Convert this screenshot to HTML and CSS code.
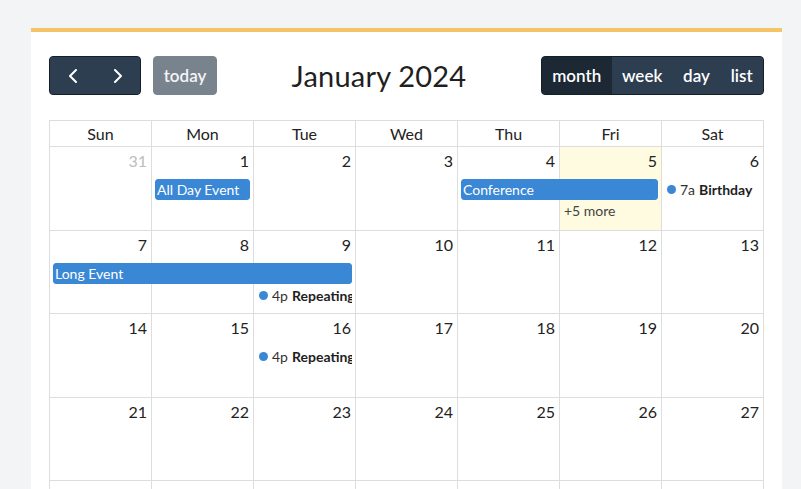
FILE: index.html
```html
<!DOCTYPE html>
<html lang="en">
<head>
<meta charset="utf-8">
<title>Calendar</title>
<link rel="stylesheet" href="styles.css">
</head>
<body>
<div class="card">
  <div class="toolbar">
    <div class="chunk">
      <div class="btn-group">
        <button class="btn nav-btn" aria-label="prev"><svg width="10" height="14" viewBox="0 0 10 14"><path d="M8 1 L2 7 L8 13"/></svg></button>
        <button class="btn nav-btn" aria-label="next"><svg width="10" height="14" viewBox="0 0 10 14"><path d="M2 1 L8 7 L2 13"/></svg></button>
      </div>
      <button class="btn today" disabled>today</button>
    </div>
    <h2 class="title">January 2024</h2>
    <div class="btn-group">
      <button class="btn active">month</button>
      <button class="btn">week</button>
      <button class="btn">day</button>
      <button class="btn">list</button>
    </div>
  </div>

  <div class="cal">
    <div class="head">
      <div class="hcell">Sun</div>
      <div class="hcell">Mon</div>
      <div class="hcell">Tue</div>
      <div class="hcell">Wed</div>
      <div class="hcell">Thu</div>
      <div class="hcell">Fri</div>
      <div class="hcell">Sat</div>
    </div>

    <div class="week">
      <div class="day c1 other"><div class="num">31</div></div>
      <div class="day c2"><div class="num">1</div></div>
      <div class="day c3"><div class="num">2</div></div>
      <div class="day c4"><div class="num">3</div></div>
      <div class="day c5"><div class="num">4</div></div>
      <div class="day c6 today-cell"><div class="num">5</div></div>
      <div class="day c7"><div class="num">6</div></div>
      <div class="ev block r2 s2 w1">All Day Event</div>
      <div class="ev block r2 s5 w2">Conference</div>
      <div class="more r3 s6">+5 more</div>
      <div class="ev dot-ev r2 s7"><span class="dot"></span><span class="time">7a</span> <b>Birthday</b></div>
    </div>

    <div class="week">
      <div class="day c1"><div class="num">7</div></div>
      <div class="day c2"><div class="num">8</div></div>
      <div class="day c3"><div class="num">9</div></div>
      <div class="day c4"><div class="num">10</div></div>
      <div class="day c5"><div class="num">11</div></div>
      <div class="day c6"><div class="num">12</div></div>
      <div class="day c7"><div class="num">13</div></div>
      <div class="ev block r2 s1 w3">Long Event</div>
      <div class="ev dot-ev r3 s3"><span class="dot"></span><span class="time">4p</span> <b>Repeating Event</b></div>
    </div>

    <div class="week">
      <div class="day c1"><div class="num">14</div></div>
      <div class="day c2"><div class="num">15</div></div>
      <div class="day c3"><div class="num">16</div></div>
      <div class="day c4"><div class="num">17</div></div>
      <div class="day c5"><div class="num">18</div></div>
      <div class="day c6"><div class="num">19</div></div>
      <div class="day c7"><div class="num">20</div></div>
      <div class="ev dot-ev r2 s3"><span class="dot"></span><span class="time">4p</span> <b>Repeating Event</b></div>
    </div>

    <div class="week">
      <div class="day c1"><div class="num">21</div></div>
      <div class="day c2"><div class="num">22</div></div>
      <div class="day c3"><div class="num">23</div></div>
      <div class="day c4"><div class="num">24</div></div>
      <div class="day c5"><div class="num">25</div></div>
      <div class="day c6"><div class="num">26</div></div>
      <div class="day c7"><div class="num">27</div></div>
    </div>

    <div class="week">
      <div class="day c1"></div>
      <div class="day c2"></div>
      <div class="day c3"></div>
      <div class="day c4"></div>
      <div class="day c5"></div>
      <div class="day c6"></div>
      <div class="day c7"></div>
    </div>
  </div>
</div>
</body>
</html>
```

FILE: styles.css
```css
* { box-sizing: border-box; }

html, body {
  margin: 0;
  padding: 0;
  background: #f3f4f6;
  font-family: Lato, "Noto Sans", "Liberation Sans", sans-serif;
  color: #222;
  overflow: hidden;
}

.card {
  margin: 28px 0 0 31px;
  width: 751px;
  background: #ffffff;
  border-top: 4px solid #f5c468;
  padding: 24px 18px 0;
}

.toolbar {
  display: flex;
  justify-content: space-between;
  align-items: center;
  margin-bottom: 25px;
}

.chunk {
  display: flex;
  align-items: center;
  gap: 12px;
}

.btn-group {
  display: flex;
  border: 1px solid #151f29;
  border-radius: 4px;
  overflow: hidden;
  background: #2c3e50;
}

.btn {
  height: 37px;
  border: 0;
  margin: 0;
  padding: 0 10.4px;
  background: #2c3e50;
  color: #ffffff;
  font-family: inherit;
  font-size: 17px;
  font-weight: 600;
  display: flex;
  align-items: center;
  justify-content: center;
}

.btn.active {
  background: #1c2833;
}

.nav-btn {
  width: 45px;
  padding: 0;
}

.nav-btn svg path {
  fill: none;
  stroke: #ffffff;
  stroke-width: 2;
  stroke-linecap: round;
  stroke-linejoin: round;
}

.today {
  height: 39px;
  width: 64px;
  border-radius: 4px;
  background: #79838e;
  border: 1px solid #79838e;
  color: #f4f5f6;
}

.title {
  margin: 0;
  font-size: 29px;
  font-weight: 400;
  color: #1f1f1f;
  letter-spacing: 0.2px;
}

.cal {
  width: 715px;
  border-left: 1px solid #dddddd;
  border-top: 1px solid #dddddd;
}

.head {
  display: grid;
  grid-template-columns: repeat(7, 1fr);
}

.hcell {
  text-align: center;
  font-size: 16px;
  line-height: 25px;
  border-right: 1px solid #dddddd;
  border-bottom: 1px solid #dddddd;
  color: #222;
}

.week {
  display: grid;
  grid-template-columns: repeat(7, 1fr);
  grid-template-rows: 32px 22px 22px 1fr;
  height: 83.5px;
}

.day {
  grid-row: 1 / -1;
  border-right: 1px solid #dddddd;
  border-bottom: 1px solid #dddddd;
}

.c1 { grid-column: 1; }
.c2 { grid-column: 2; }
.c3 { grid-column: 3; }
.c4 { grid-column: 4; }
.c5 { grid-column: 5; }
.c6 { grid-column: 6; }
.c7 { grid-column: 7; }

.today-cell { background: #fffbe1; }

.num {
  text-align: right;
  padding: 2px 4px 0;
  font-size: 16px;
  line-height: 24px;
  color: #222;
}

.other .num { color: #bdbdbd; }

.r2 { grid-row: 2; }
.r3 { grid-row: 3; }
.s1 { grid-column-start: 1; }
.s2 { grid-column-start: 2; }
.s3 { grid-column-start: 3; }
.s5 { grid-column-start: 5; }
.s6 { grid-column-start: 6; }
.s7 { grid-column-start: 7; }
.w1 { grid-column-end: span 1; }
.w2 { grid-column-end: span 2; }
.w3 { grid-column-end: span 3; }

.ev {
  margin: 0 4px 0 3px;
  height: 21px;
  font-size: 14px;
  white-space: nowrap;
  overflow: hidden;
  align-self: start;
}

.block {
  background: #3a87d6;
  border: 1px solid #3a87d6;
  border-radius: 3px;
  color: #ffffff;
  line-height: 19px;
  padding: 0 1px;
}

.dot-ev {
  display: flex;
  align-items: center;
  margin: 0 4px 0 2px;
  color: #333;
}

.dot {
  flex: none;
  width: 9px;
  height: 9px;
  border-radius: 50%;
  background: #3a87d6;
  margin: 0 4px 0 3px;
}

.time { margin-right: 4px; }

.dot-ev b {
  font-weight: 700;
  color: #1e1e1e;
}

.more {
  margin: 0 3px;
  padding: 0 1px;
  font-size: 14px;
  line-height: 19px;
  color: #444;
  align-self: start;
}
```
